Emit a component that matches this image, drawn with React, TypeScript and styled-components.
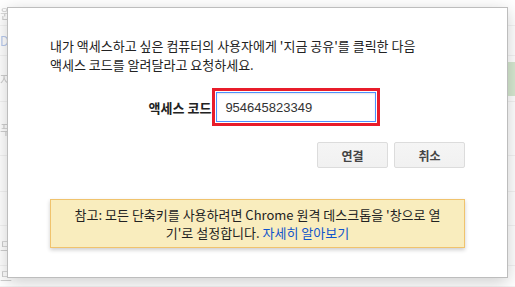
import React from "react";
import styled, { createGlobalStyle } from "styled-components";

const Global = createGlobalStyle`
  html, body { margin: 0; padding: 0; background: #fff; }
  body { font-family: "Noto Sans CJK KR", "Noto Sans", Arial, sans-serif; }
  #root { width: 515px; height: 287px; }
`;

const Page = styled.div`
  position: relative;
  width: 515px;
  height: 287px;
  overflow: hidden;
  background: #fff;
`;

const Backdrop = styled.div`
  display: flex;
  flex-direction: column;
  height: 100%;
  opacity: 0.35;
  filter: blur(0.6px);
`;

const BackRow = styled.div<{ $h: number }>`
  height: ${(p) => p.$h}px;
  border-bottom: 1px solid #ddd;
  display: flex;
  justify-content: space-between;
  align-items: center;
  font-size: 13px;
  color: #666;
`;

const BackText = styled.span<{ $blue?: boolean }>`
  color: ${(p) => (p.$blue ? "#3366cc" : "#777")};
`;

const GreenBlock = styled.span`
  width: 12px;
  height: 34px;
  background: #8dc07a;
`;

const Dialog = styled.div`
  position: absolute;
  left: 7px;
  top: 7px;
  width: 501px;
  height: 271px;
  background: #fff;
  border: 1px solid #bdbdbd;
  box-shadow: 0 4px 16px rgba(0, 0, 0, 0.2);
  padding: 28px 42px 0 42px;
  box-sizing: border-box;
  display: flex;
  flex-direction: column;
`;

const Message = styled.p`
  margin: 0;
  font-size: 13px;
  line-height: 19px;
  color: #222;
`;

const CodeRow = styled.div`
  display: flex;
  align-items: center;
  justify-content: center;
  margin-top: 14px;
  padding-left: 14px;
`;

const Label = styled.label`
  font-size: 13px;
  font-weight: bold;
  color: #222;
  margin-right: 1px;
`;

const Highlight = styled.div`
  border: 3px solid #e81c2a;
  padding: 1px;
  display: flex;
`;

const CodeInput = styled.div`
  width: 150px;
  height: 28px;
  border: 1px solid #4d90fe;
  box-shadow: inset 0 1px 2px rgba(0, 0, 0, 0.1);
  display: flex;
  align-items: center;
  padding-left: 8px;
  box-sizing: content-box;
  font-family: Arial, "Liberation Sans", sans-serif;
  font-size: 13px;
  color: #333;
`;

const Buttons = styled.div`
  display: flex;
  justify-content: flex-end;
  gap: 6px;
  margin-top: 16px;
`;

const Button = styled.button`
  width: 71px;
  height: 26px;
  border: 1px solid #dcdcdc;
  border-radius: 2px;
  background: linear-gradient(#f5f5f5, #f1f1f1);
  font-family: "Noto Sans CJK KR", sans-serif;
  font-weight: bold;
  font-size: 12px;
  color: #444;
  padding: 0;
`;

const Note = styled.div`
  margin-top: 31px;
  background: #f9edbe;
  border: 1px solid #f0c36d;
  box-shadow: 0 2px 4px rgba(0, 0, 0, 0.2);
  text-align: center;
  font-size: 13px;
  line-height: 18px;
  color: #222;
  padding: 6px 10px 5px;
`;

const Link = styled.a`
  color: #1155cc;
  text-decoration: none;
`;

export default function App() {
  return (
    <Page>
      <Global />
      <Backdrop>
        <BackRow $h={26}><BackText>윈</BackText><span /></BackRow>
        <BackRow $h={30}><BackText $blue>Do</BackText><span /></BackRow>
        <BackRow $h={46}><BackText>자</BackText><GreenBlock /></BackRow>
        <BackRow $h={54}><BackText>푸</BackText><span /></BackRow>
        <BackRow $h={36}><span /><span /></BackRow>
        <BackRow $h={34}><span /><span /></BackRow>
        <BackRow $h={40}><BackText>드</BackText><span /></BackRow>
        <BackRow $h={21}><BackText>드</BackText><span /></BackRow>
      </Backdrop>
      <Dialog>
        <Message>
          내가 액세스하고 싶은 컴퓨터의 사용자에게 '지금 공유'를 클릭한 다음
          <br />
          액세스 코드를 알려달라고 요청하세요.
        </Message>
        <CodeRow>
          <Label>액세스 코드</Label>
          <Highlight>
            <CodeInput>954645823349</CodeInput>
          </Highlight>
        </CodeRow>
        <Buttons>
          <Button>연결</Button>
          <Button>취소</Button>
        </Buttons>
        <Note>
          참고: 모든 단축키를 사용하려면 Chrome 원격 데스크톱을 '창으로 열
          <br />
          기'로 설정합니다. <Link href="#">자세히 알아보기</Link>
        </Note>
      </Dialog>
    </Page>
  );
}
